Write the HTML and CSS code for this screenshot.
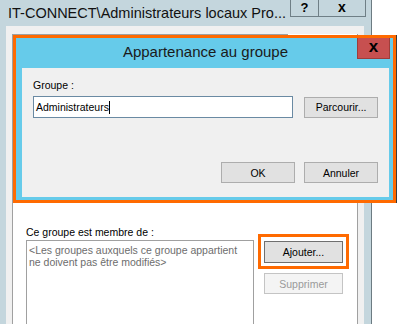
FILE: index.html
```html
<!DOCTYPE html>
<html lang="fr">
<head>
    <meta charset="UTF-8">
    <title>Appartenance au groupe</title>
    <link rel="stylesheet" href="styles.css">
</head>
<body>
    <div class="win">
        <div class="win-title">
            <span class="win-title-text">IT-CONNECT\Administrateurs locaux Pro...</span>
            <div class="win-btns">
                <span class="win-btn help">?</span>
                <span class="win-btn close">x</span>
            </div>
        </div>
        <div class="win-body">
            <div class="tab-panel">
                <div class="tab-line"></div>
                <p class="label">Ce groupe est membre de :</p>
                <div class="member-row">
                    <div class="listbox">&lt;Les groupes auxquels ce groupe appartient<br>ne doivent pas être modifiés&gt;</div>
                    <div class="member-btns">
                        <div class="highlight">
                            <button class="btn btn-focus">Ajouter...</button>
                        </div>
                        <button class="btn btn-disabled">Supprimer</button>
                    </div>
                </div>
            </div>
        </div>
    </div>

    <div class="dialog">
        <div class="dlg-frame">
            <div class="dlg-title">
                Appartenance au groupe
                <span class="dlg-close">x</span>
            </div>
            <div class="dlg-content">
                <p class="label">Groupe :</p>
                <div class="field-row">
                    <div class="input">Administrateurs<span class="caret"></span></div>
                    <button class="btn">Parcourir...</button>
                </div>
                <div class="actions">
                    <button class="btn">OK</button>
                    <button class="btn">Annuler</button>
                </div>
            </div>
        </div>
    </div>
</body>
</html>
```

FILE: styles.css
```css
* {
    margin: 0;
    padding: 0;
    box-sizing: border-box;
}

body {
    width: 399px;
    height: 324px;
    overflow: hidden;
    position: relative;
    background: #ffffff;
    font-family: "Liberation Sans", Arial, sans-serif;
    font-size: 10.5px;
    color: #000;
}

/* fenêtre de fond */
.win {
    width: 372px;
    height: 324px;
    background: #c4d6dd;
    border-right: 1px solid #6c7b82;
    display: flex;
    flex-direction: column;
}

.win-title {
    height: 26px;
    display: flex;
    justify-content: space-between;
    align-items: flex-start;
    padding-left: 8px;
}

.win-title-text {
    font-size: 14.5px;
    line-height: 26px;
    color: #111;
}

.win-btns {
    display: flex;
    margin-right: 5px;
}

.win-btn {
    height: 17px;
    border: 1px solid #6f7f86;
    border-top: 0;
    font-weight: bold;
    font-size: 13px;
    line-height: 16px;
    text-align: center;
}

.win-btn.help {
    width: 29px;
}

.win-btn.close {
    width: 47px;
    border-left: 0;
    font-size: 14px;
    line-height: 14px;
}

.win-body {
    flex: 1;
    margin: 0 7px 0 6px;
    background: #f0f0f0;
    padding: 8px 6px 0 6px;
}

.tab-panel {
    height: 100%;
    background: #ffffff;
    border-left: 1px solid #a0a0a0;
    border-right: 1px solid #a0a0a0;
    padding: 0 0 0 13px;
}

.tab-line {
    width: 276px;
    height: 1px;
    margin-left: -14px;
    margin-bottom: 191px;
    background: #a0a0a0;
}

.label {
    line-height: 13px;
}

.member-row {
    display: flex;
    align-items: flex-start;
    gap: 4px;
    margin-top: 1px;
}

.listbox {
    width: 228px;
    height: 100px;
    border: 1px solid #a0a0a0;
    padding: 3px 2px;
    line-height: 12px;
    color: #6d6d6d;
    white-space: nowrap;
}

.member-btns {
    display: flex;
    flex-direction: column;
    gap: 4px;
    margin-top: -6px;
}

.highlight {
    width: 91px;
    height: 35px;
    border: 3px solid #ff6a00;
    padding: 4px 3px 0 3px;
}

.btn {
    height: 21px;
    width: 74px;
    font-family: inherit;
    font-size: 10.5px;
    color: #000;
    background: #e1e1e1;
    border: 1px solid #adadad;
}

.btn-focus {
    width: 79px;
    height: 22px;
    border-color: #6f6f6f;
}

.btn-disabled {
    width: 79px;
    margin-left: 6px;
    color: #9a9a9a;
    background: #f4f4f4;
    border-color: #c4c4c4;
}

/* boîte de dialogue par-dessus */
.dialog {
    position: absolute;
    left: 13px;
    top: 35px;
    width: 383px;
    height: 168px;
    border: 3px solid #ff6a00;
    box-shadow: 1px 0 0 #3a3a3a;
}

.dlg-frame {
    height: 100%;
    background: #66cbea;
    display: flex;
    flex-direction: column;
    padding: 0 4px 3px 6px;
}

.dlg-title {
    position: relative;
    height: 30px;
    line-height: 28px;
    font-size: 15px;
    text-align: center;
    color: #1a1a1a;
}

.dlg-close {
    position: absolute;
    top: 0;
    right: -1px;
    width: 33px;
    height: 21px;
    background: #c75050;
    border: 1px solid #9e3d3a;
    border-top: 0;
    font-weight: bold;
    font-size: 17px;
    line-height: 17px;
    color: #000;
}

.dlg-content {
    flex: 1;
    background: #f0f0f0;
    padding: 11px 11px 0 11px;
}

.field-row {
    display: flex;
    align-items: center;
    gap: 11px;
    margin-top: 4px;
}

.input {
    width: 261px;
    height: 22px;
    background: #ffffff;
    border: 1px solid #6a8aa3;
    padding-left: 2px;
    line-height: 20px;
}

.caret {
    display: inline-block;
    width: 1px;
    height: 13px;
    background: #000;
    vertical-align: -3px;
}

.actions {
    display: flex;
    justify-content: flex-end;
    gap: 9px;
    margin-top: 44px;
}
```
